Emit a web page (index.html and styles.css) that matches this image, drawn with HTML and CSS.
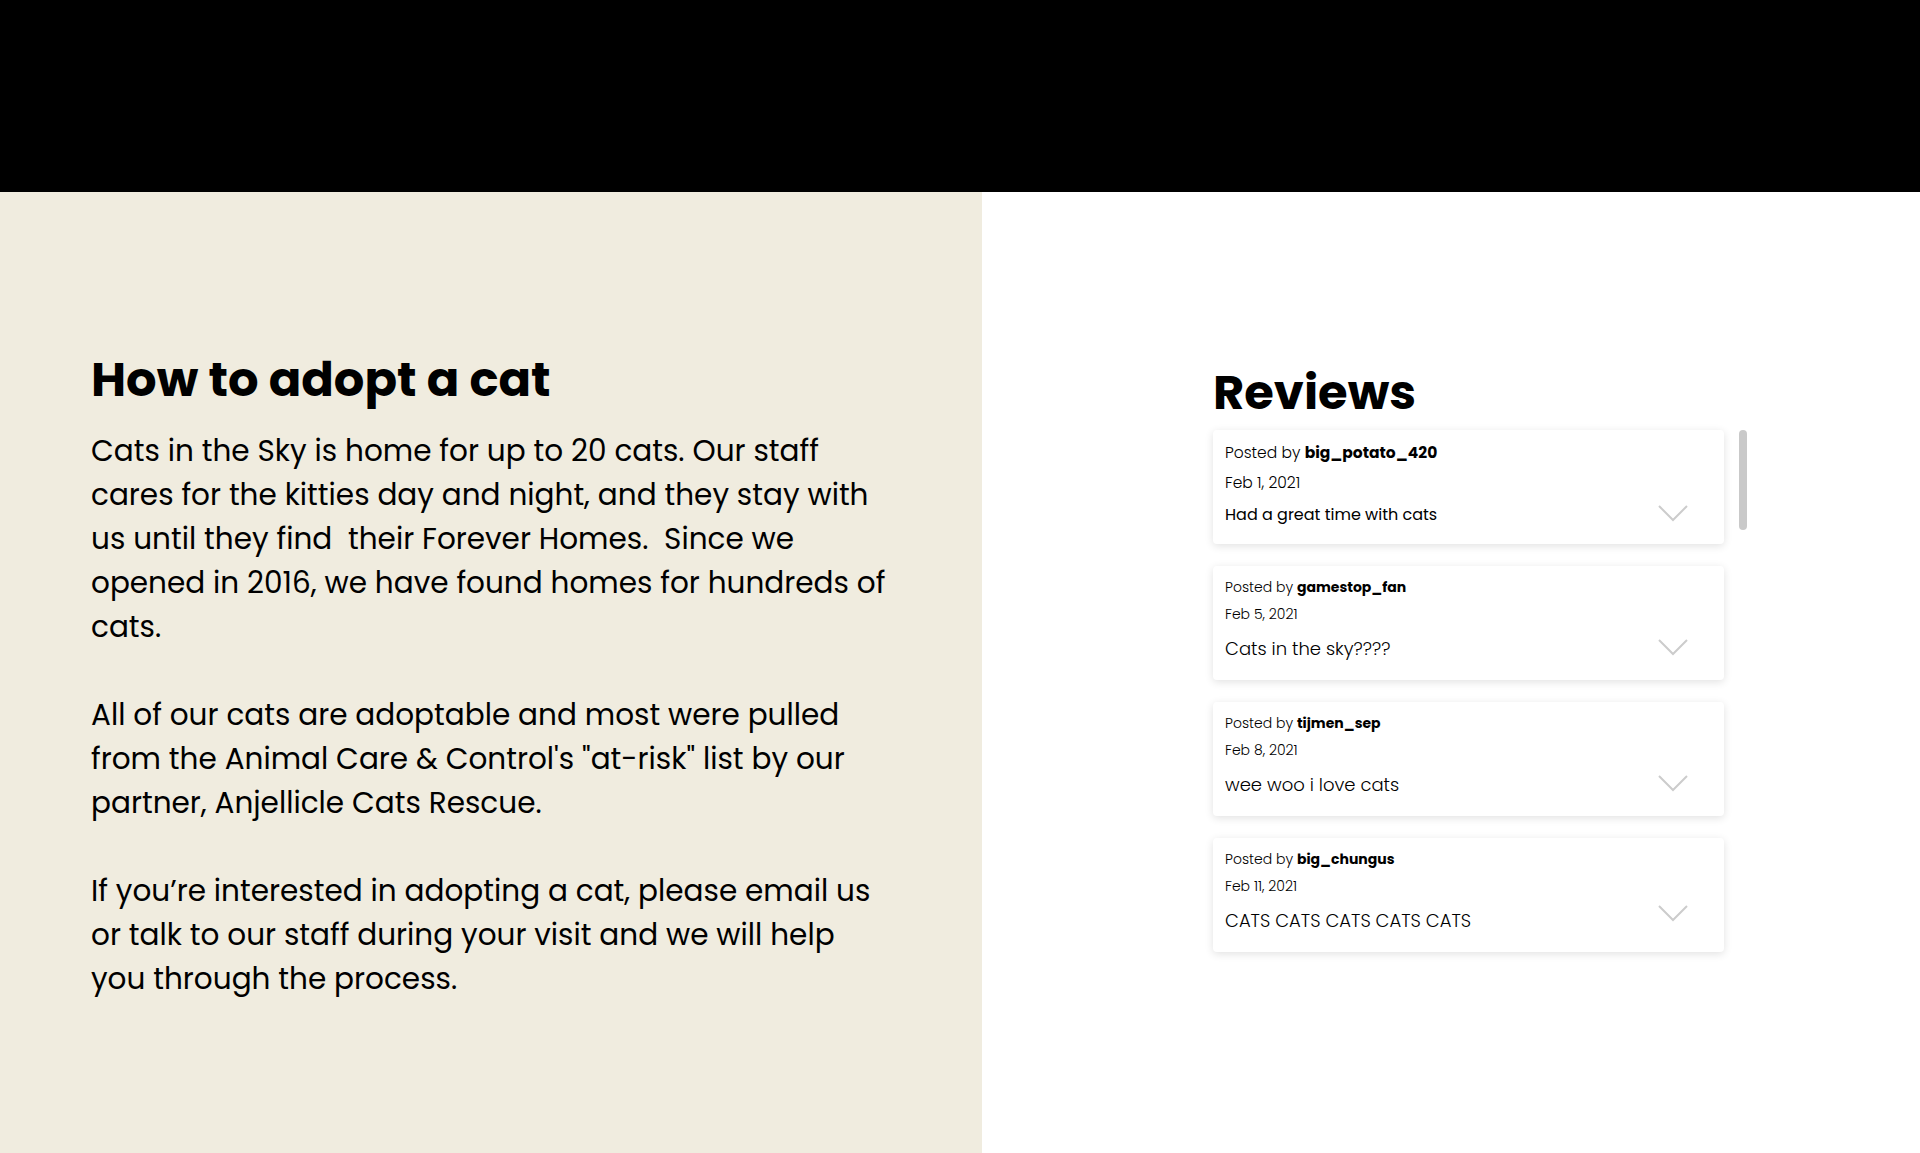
FILE: index.html
```html
<!DOCTYPE html>
<html lang="en">
<head>
<meta charset="utf-8">
<title>Cats in the Sky</title>
<link rel="stylesheet" href="styles.css">
</head>
<body>
<header class="topbar"></header>
<main class="content">
  <section class="adopt">
    <h1 class="adopt-title">How to adopt a cat</h1>
    <p class="adopt-text">Cats in the Sky is home for up to 20 cats. Our staff cares for the kitties day and night, and they stay with us until they find&nbsp; their Forever Homes.&nbsp; Since we opened in 2016, we have found homes for hundreds of cats.</p>
    <p class="adopt-text">All of our cats are adoptable and most were pulled from the Animal Care &amp; Control's "at-risk" list by our partner, Anjellicle Cats Rescue.</p>
    <p class="adopt-text">If you’re interested in adopting a cat, please email us or talk to our staff during your visit and we will help you through the process.</p>
  </section>
  <section class="reviews">
    <h2 class="reviews-title">Reviews</h2>
    <div class="reviews-body">
      <div class="review-list">
        <article class="review first">
          <div class="review-meta">Posted by <b>big_potato_420</b></div>
          <div class="review-date">Feb 1, 2021</div>
          <div class="review-row">
            <div class="review-text">Had a great time with cats</div>
            <svg class="chevron" viewBox="0 0 30 17" width="30" height="17"><path d="M1 1 L15 15 L29 1" fill="none" stroke="#cccccc" stroke-width="2"/></svg>
          </div>
        </article>
        <article class="review">
          <div class="review-meta">Posted by <b>gamestop_fan</b></div>
          <div class="review-date">Feb 5, 2021</div>
          <div class="review-row">
            <div class="review-text">Cats in the sky????</div>
            <svg class="chevron" viewBox="0 0 30 17" width="30" height="17"><path d="M1 1 L15 15 L29 1" fill="none" stroke="#cccccc" stroke-width="2"/></svg>
          </div>
        </article>
        <article class="review">
          <div class="review-meta">Posted by <b>tijmen_sep</b></div>
          <div class="review-date">Feb 8, 2021</div>
          <div class="review-row">
            <div class="review-text">wee woo i love cats</div>
            <svg class="chevron" viewBox="0 0 30 17" width="30" height="17"><path d="M1 1 L15 15 L29 1" fill="none" stroke="#cccccc" stroke-width="2"/></svg>
          </div>
        </article>
        <article class="review last">
          <div class="review-meta">Posted by <b>big_chungus</b></div>
          <div class="review-date">Feb 11, 2021</div>
          <div class="review-row">
            <div class="review-text">CATS CATS CATS CATS CATS</div>
            <svg class="chevron" viewBox="0 0 30 17" width="30" height="17"><path d="M1 1 L15 15 L29 1" fill="none" stroke="#cccccc" stroke-width="2"/></svg>
          </div>
        </article>
      </div>
      <div class="scroll-track"><div class="scroll-thumb"></div></div>
    </div>
  </section>
</main>
</body>
</html>
```
FILE: styles.css
```css
* { box-sizing: border-box; }
html, body { margin: 0; padding: 0; }
body {
  font-family: Poppins, "Open Sans", "Noto Sans", sans-serif;
  color: #000;
  background: #fff;
  width: 1920px;
  height: 1153px;
  overflow: hidden;
}
.topbar {
  height: 192px;
  background: #000;
}
.content {
  display: flex;
  height: 961px;
}
.adopt {
  width: 982px;
  background: #f0ecdf;
  padding: 156px 0 0 91px;
}
.adopt-title {
  margin: 0 0 17px;
  font-size: 48px;
  line-height: 64px;
  font-weight: 700;
}
.adopt-text {
  width: 797px;
  margin: 0 0 44px;
  font-size: 29.5px;
  line-height: 44px;
  font-weight: 400;
}
.reviews {
  flex: 1;
  padding: 166px 0 0 231px;
}
.reviews-title {
  margin: 0 0 2px;
  font-size: 48px;
  line-height: 70px;
  font-weight: 700;
}
.reviews-body {
  display: flex;
  gap: 15px;
  align-items: flex-start;
}
.review-list {
  display: flex;
  flex-direction: column;
  gap: 22px;
  width: 511px;
}
.review {
  height: 114px;
  background: #fff;
  border-radius: 4px;
  box-shadow: 0 2px 8px rgba(0, 0, 0, 0.12);
  padding: 10px 36px 0 12px;
}
.review-meta {
  font-size: 14px;
  line-height: 22px;
  font-weight: 300;
}
.review-meta b { font-weight: 700; }
.review-date {
  font-size: 14px;
  line-height: 22px;
  margin-top: 5px;
  font-weight: 300;
}
.review-row {
  display: flex;
  justify-content: space-between;
  align-items: flex-start;
  margin-top: 10px;
}
.review-text {
  font-size: 18px;
  line-height: 28px;
  font-weight: 300;
}
.chevron {
  display: block;
  margin-top: 4px;
}
.review.first {
  padding-top: 12px;
}
.review.first .review-meta,
.review.first .review-date {
  font-size: 15.5px;
}
.review.first .review-date { margin-top: 8px; }
.review.first .review-row { margin-top: 7px; }
.review.first .review-text {
  font-size: 16px;
  font-weight: 400;
}
.review.last .chevron { margin-top: -2px; }
.scroll-track {
  width: 8px;
}
.scroll-thumb {
  width: 8px;
  height: 100px;
  border-radius: 4px;
  background: #c9c9c9;
}
```
